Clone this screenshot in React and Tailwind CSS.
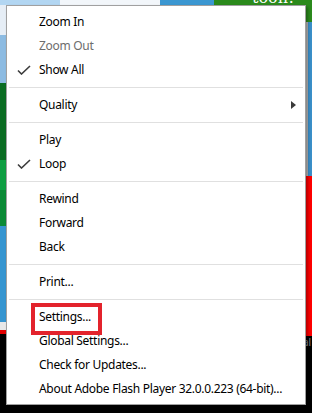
import React from 'react';

const Check = () => (
  <svg width="14" height="10" viewBox="0 0 14 10" className="absolute left-[10px] top-[7px]">
    <path d="M1 5.5 L4.5 9 L13 1" fill="none" stroke="#3c3c3c" strokeWidth="1.6" />
  </svg>
);

function Item({ label, checked, disabled, submenu }) {
  return (
    <div className="relative h-[24px] flex items-center pl-[32px] pr-[8px]">
      {checked && <Check />}
      <span className={disabled ? 'text-[#6d6d6d]' : 'text-black'}>{label}</span>
      {submenu && (
        <svg width="5" height="8" viewBox="0 0 5 8" className="ml-auto mr-[1px]">
          <polygon points="0,0 5,4 0,8" fill="#3a3a3a" />
        </svg>
      )}
    </div>
  );
}

const Sep = () => (
  <div className="h-[11px] flex items-center px-[2px]">
    <div className="h-px w-full bg-[#e0e0e0]" />
  </div>
);

export default function App() {
  return (
    <div className="relative w-[312px] h-[413px] overflow-hidden bg-black font-['Noto_Sans',sans-serif] text-[12px] tracking-[-0.3px]">
      {/* flash content showing around the menu */}
      <div className="flex h-full">
        <div className="w-[6px] flex flex-col">
          <div className="h-[5px] bg-[#b2d6f2]" />
          <div className="h-[30px] bg-[#e6eef6]" />
          <div className="h-[48px] bg-[#8cbbe2]" />
          <div className="h-[77px] bg-[#0a6c22]" />
          <div className="h-[30px] bg-[#0e9e42]" />
          <div className="h-[36px] bg-[#0b8a36]" />
          <div className="h-[96px] bg-[#3695d0]" />
          <div className="h-[8px] bg-[#e8e8e8]" />
          <div className="h-[4px] bg-[#e00000]" />
        </div>
        <div className="flex-1 flex flex-col">
          <div className="h-[5px] flex">
            <div className="w-[54px] bg-[#b2d6f2]" />
            <div className="w-[100px] bg-[#f2f6fa]" />
            <div className="w-[54px] bg-[#3b97d1]" />
            <div className="flex-1 bg-[#2b8a1c] overflow-hidden pl-[38px] leading-none">
              <span className="block -mt-[10px] text-white text-[16px] font-['DejaVu_Serif',serif] tracking-normal">toon!</span>
            </div>
          </div>
        </div>
        <div className="w-[7px] flex flex-col">
          <div className="h-[22px] bg-[#2b8a1c]" />
          <div className="h-[154px] flex">
            <div className="w-[3px] bg-[#b8b8b8]" />
            <div className="flex-1 bg-[#3a8fc9]" />
          </div>
          <div className="h-[160px] bg-[#ff0000]" />
          <div className="pt-[1px] text-[#8a8a8a] text-[10px] leading-none tracking-normal -ml-[2px]">al</div>
        </div>
      </div>

      {/* context menu */}
      <div className="absolute left-[6px] top-[5px] w-[300px] border border-[#a0a0a0] bg-white pt-[4px] pb-[3px] shadow-[2px_2px_3px_rgba(0,0,0,0.3)]">
        <Item label="Zoom In" />
        <Item label="Zoom Out" disabled />
        <Item label="Show All" checked />
        <Sep />
        <Item label="Quality" submenu />
        <Sep />
        <Item label="Play" />
        <Item label="Loop" checked />
        <Sep />
        <Item label="Rewind" />
        <Item label="Forward" />
        <Item label="Back" />
        <Sep />
        <Item label="Print..." />
        <Sep />
        <Item label="Settings..." />
        <Item label="Global Settings..." />
        <Item label="Check for Updates..." />
        <Item label="About Adobe Flash Player 32.0.0.223 (64-bit)..." />
      </div>

      {/* annotation box */}
      <div className="absolute left-[31px] top-[303px] w-[71px] h-[32px] border-[4px] border-[#e3232c]" />
    </div>
  );
}
